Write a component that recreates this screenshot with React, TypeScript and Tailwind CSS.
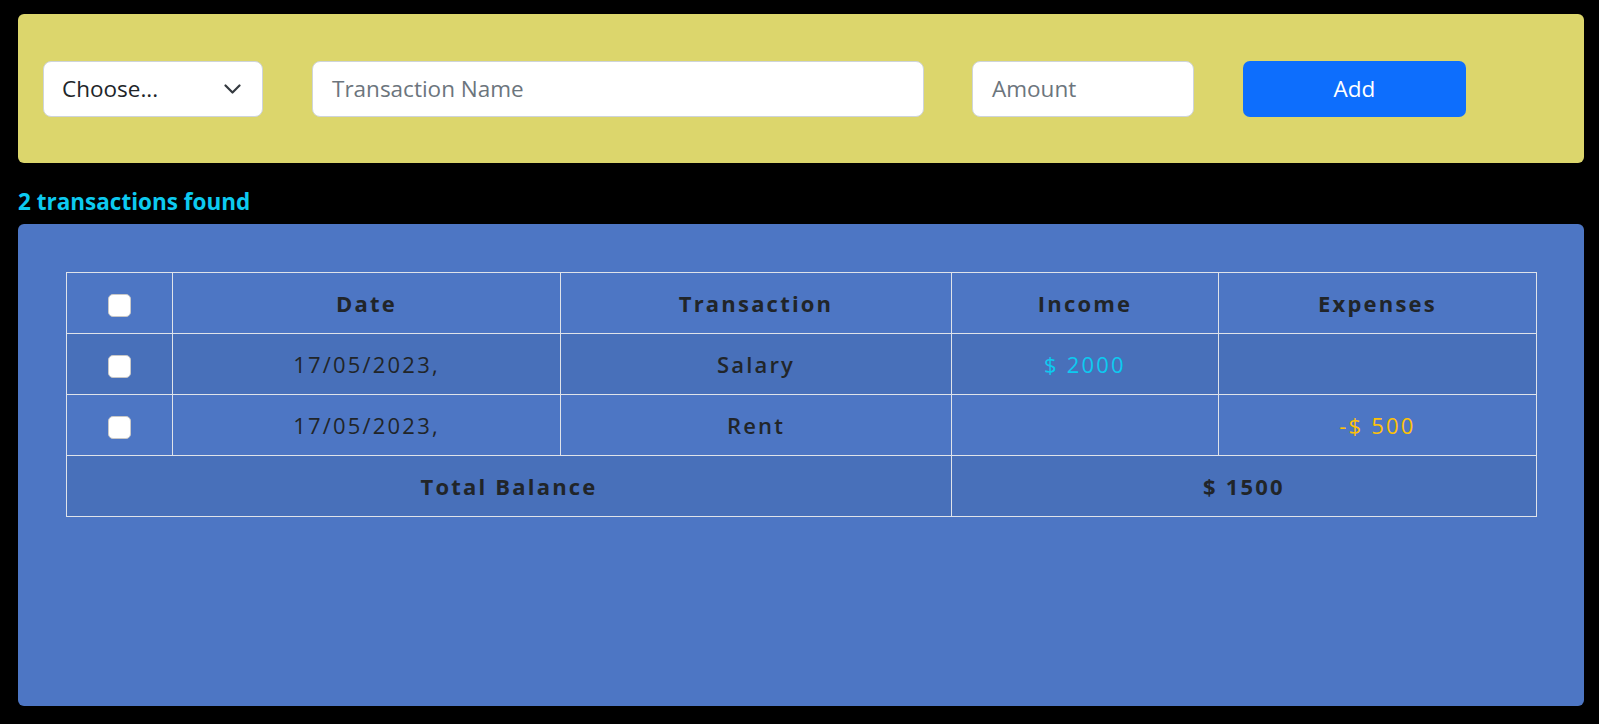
const rows = [
  { date: '17/05/2023,', name: 'Salary', income: '$ 2000', expense: '' },
  { date: '17/05/2023,', name: 'Rent', income: '', expense: '-$ 500' },
];

function Box() {
  return (
    <span className="inline-block w-[23px] h-[23px] rounded-[5px] bg-white border border-[#c8c8c8] align-middle" />
  );
}

const cell = 'border border-[#dfe3ea]';

export default function App() {
  return (
    <div className="min-h-[724px] bg-black font-['Open_Sans',sans-serif] text-[#212529]">
      <div className="w-[1566px] ml-[18px] pt-[14px]">
        <div className="flex items-center h-[149px] pl-[25px] bg-[#dcd66c] rounded-[6px]">
          <div className="flex items-center justify-between w-[220px] h-[56px] pl-[18px] pr-[21px] bg-white border border-[#ced4da] rounded-[8px] text-[22.5px]">
            <span>Choose...</span>
            <svg width="17" height="10" viewBox="0 0 17 10" fill="none">
              <path d="M1.5 1.5 L8.5 8.5 L15.5 1.5" stroke="#343a40" strokeWidth="2.2" strokeLinecap="round" strokeLinejoin="round" />
            </svg>
          </div>
          <div className="ml-[49px] w-[612px] h-[56px] flex items-center px-[19px] bg-white border border-[#ced4da] rounded-[8px] text-[22.5px] text-[#6c757d]">
            Transaction Name
          </div>
          <div className="ml-[48px] w-[222px] h-[56px] flex items-center px-[19px] bg-white border border-[#ced4da] rounded-[8px] text-[22.5px] text-[#6c757d]">
            Amount
          </div>
          <button
            type="button"
            className="ml-[49px] w-[223px] h-[56px] bg-[#0d6efd] text-white rounded-[7px] text-[22.5px]"
          >
            Add
          </button>
        </div>
        <div className="mt-[22px] mb-[5px] h-[34px] flex items-center text-[#0dcaf0] font-bold text-[22.5px]">
          2 transactions found
        </div>
        <div className="h-[482px] bg-[#4d76c4] rounded-[6px] p-[48px]">
          <table className="w-[1470px] border-collapse text-[22px] tracking-[0.1em] text-center table-fixed font-medium">
            <colgroup>
              <col className="w-[106px]" />
              <col className="w-[388px]" />
              <col className="w-[391px]" />
              <col className="w-[267px]" />
              <col className="w-[318px]" />
            </colgroup>
            <thead>
              <tr className="h-[61px] font-bold">
                <th className={cell}><Box /></th>
                <th className={cell}>Date</th>
                <th className={cell}>Transaction</th>
                <th className={cell}>Income</th>
                <th className={cell}>Expenses</th>
              </tr>
            </thead>
            <tbody>
              {rows.map((r, i) => (
                <tr key={i} className={i % 2 === 0 ? 'h-[61px] bg-[#4870ba]' : 'h-[61px]'}>
                  <td className={cell}><Box /></td>
                  <td className={cell}>{r.date}</td>
                  <td className={cell + ' font-semibold'}>{r.name}</td>
                  <td className={cell + ' text-[#0dcaf0]'}>{r.income}</td>
                  <td className={cell + ' text-[#ffc107]'}>{r.expense}</td>
                </tr>
              ))}
              <tr className="h-[61px] bg-[#4870ba] font-bold">
                <td colSpan={3} className={cell}>Total Balance</td>
                <td colSpan={2} className={cell}>$ 1500</td>
              </tr>
            </tbody>
          </table>
        </div>
      </div>
    </div>
  );
}
